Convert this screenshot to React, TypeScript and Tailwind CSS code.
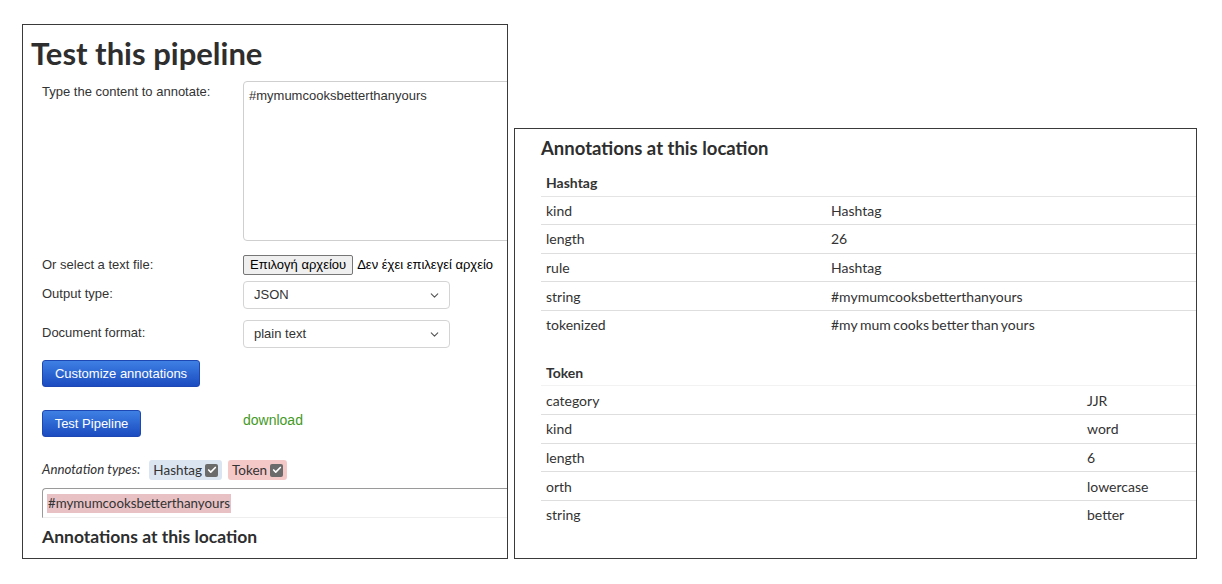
import { ChevronDown, Check } from "lucide-react";

const hashtagRows = [
  ["kind", "Hashtag"],
  ["length", "26"],
  ["rule", "Hashtag"],
  ["string", "#mymumcooksbetterthanyours"],
  ["tokenized", "#my mum cooks better than yours"],
];

const tokenRows = [
  ["category", "JJR"],
  ["kind", "word"],
  ["length", "6"],
  ["orth", "lowercase"],
  ["string", "better"],
];

const arial = "font-['Liberation_Sans',Arial,sans-serif]";
const segoe = "font-['Lato','Noto_Sans',sans-serif]";

const Tick = () => (
  <span className="inline-flex h-[13px] w-[13px] items-center justify-center rounded-[2px] bg-[#6b6b6b] ml-[3px]">
    <Check size={10} strokeWidth={4} className="text-white" />
  </span>
);

const Select = ({ value }: { value: string }) => (
  <div className="flex h-[28px] w-[207px] items-center justify-between rounded-[4px] border border-[#d4d4d4] pl-[10px] pr-[8px] text-[13px] text-[#333]">
    <span>{value}</span>
    <ChevronDown size={13} className="text-[#555]" />
  </div>
);

const BlueButton = ({ label, w }: { label: string; w: string }) => (
  <button
    className={`${w} h-[27px] rounded-[3px] border border-[#1d48b3] bg-gradient-to-b from-[#3f80e4] to-[#1c4bc0] text-[13px] text-white`}
  >
    {label}
  </button>
);

const PropTable = ({
  title,
  rows,
  valueCol,
  topLine,
}: {
  title: string;
  rows: string[][];
  valueCol: string;
  topLine: string;
}) => (
  <table className="w-full border-collapse text-[14px] text-[#333]">
    <thead>
      <tr className="h-[26px]">
        <th className="pl-[5px] text-left align-middle font-bold" colSpan={2}>
          {title}
        </th>
      </tr>
    </thead>
    <tbody>
      {rows.map(([k, v], i) => (
        <tr key={k} className={`h-[28.6px] border-t ${i === 0 ? topLine : "border-[#dedede]"}`}>
          <td className={`${valueCol} pl-[5px] align-middle`}>{k}</td>
          <td className="align-middle" style={{ wordSpacing: k === "tokenized" ? "-1px" : undefined }}>
            {v}
          </td>
        </tr>
      ))}
    </tbody>
  </table>
);

export default function App() {
  return (
    <div className="flex h-[584px] w-[1222px] items-start bg-white">
      {/* Left window */}
      <div className="ml-[22px] mt-[24px] h-[535px] w-[486px] overflow-hidden border border-[#3a3a3a] text-[#333]">
        <h1 className={`${segoe} ml-[8px] mt-[10px] text-[31px] font-bold leading-[36px] text-[#2e2e2e]`}>
          Test this pipeline
        </h1>

        <div className={`${arial} mt-[10px] grid grid-cols-[220px_1fr] text-[13px]`}>
          <div className="pl-[19px] pt-[1px]">Type the content to annotate:</div>
          <div className="h-[160px] w-[300px] rounded-[4px] border border-[#cfcfcf] px-[5px] pt-[4px]">
            #mymumcooksbetterthanyours
          </div>

          <div className="mt-[14px] pl-[19px]">Or select a text file:</div>
          <div className="mt-[14px] flex items-center gap-[4px] whitespace-nowrap">
            <span className="flex h-[20px] items-center rounded-[2px] border border-[#767676] bg-[#efefef] px-[6px] text-[13px] text-black">
              Επιλογή αρχείου
            </span>
            <span className="text-black">Δεν έχει επιλεγεί αρχείο</span>
          </div>

          <div className="mt-[6px] pl-[19px] pt-[3px]">Output type:</div>
          <div className="mt-[6px]">
            <Select value="JSON" />
          </div>

          <div className="mt-[11px] pl-[19px] pt-[3px]">Document format:</div>
          <div className="mt-[11px]">
            <Select value="plain text" />
          </div>
        </div>

        <div className={`${arial} ml-[19px] mt-[12px]`}>
          <BlueButton label="Customize annotations" w="w-[158px]" />
        </div>

        <div className={`${arial} mt-[23px] grid grid-cols-[220px_1fr] items-start`}>
          <div className="pl-[19px]">
            <BlueButton label="Test Pipeline" w="w-[99px]" />
          </div>
          <span className="text-[14px] leading-[20px] text-[#43991f]">download</span>
        </div>

        <div className={`${segoe} ml-[19px] mt-[23px] flex items-center text-[13.3px]`}>
          <span className="mr-[9px] italic">Annotation types:</span>
          <span className="mr-[6px] flex h-[20px] items-center rounded-[3px] bg-[#dbe5f2] px-[4px] text-[13.5px]">
            Hashtag
            <Tick />
          </span>
          <span className="flex h-[20px] items-center rounded-[3px] bg-[#f5c8c8] px-[4px] text-[13.5px]">
            Token
            <Tick />
          </span>
        </div>

        <div
          className={`${segoe} ml-[19px] mt-[8px] flex h-[30px] items-center rounded-tl-[4px] border-l border-t border-b border-[#9a9a9a] border-b-[#eeeeee] pl-[4px] text-[13.3px]`}
        >
          <span className="bg-[#e8c1c5] px-[1px] leading-[19px]">#mymumcooksbetterthanyours</span>
        </div>

        <h2 className={`${segoe} ml-[19px] mt-[8px] text-[17.5px] font-bold leading-[22px] text-[#2e2e2e]`}>
          Annotations at this location
        </h2>
      </div>

      {/* Right window */}
      <div
        className={`${segoe} ml-[6px] mt-[128px] h-[431px] w-[683px] overflow-hidden border border-[#3a3a3a] text-[#333]`}
      >
        <h2 className="ml-[26px] mt-[7px] text-[18.5px] font-bold leading-[24px] text-[#2e2e2e]">
          Annotations at this location
        </h2>
        <div className="ml-[26px] mt-[10px]">
          <PropTable title="Hashtag" rows={hashtagRows} valueCol="w-[290px]" topLine="border-[#e4e4e4]" />
        </div>
        <div className="ml-[26px] mt-[21px]">
          <PropTable title="Token" rows={tokenRows} valueCol="w-[546px]" topLine="border-[#f2f2f2]" />
        </div>
      </div>
    </div>
  );
}
